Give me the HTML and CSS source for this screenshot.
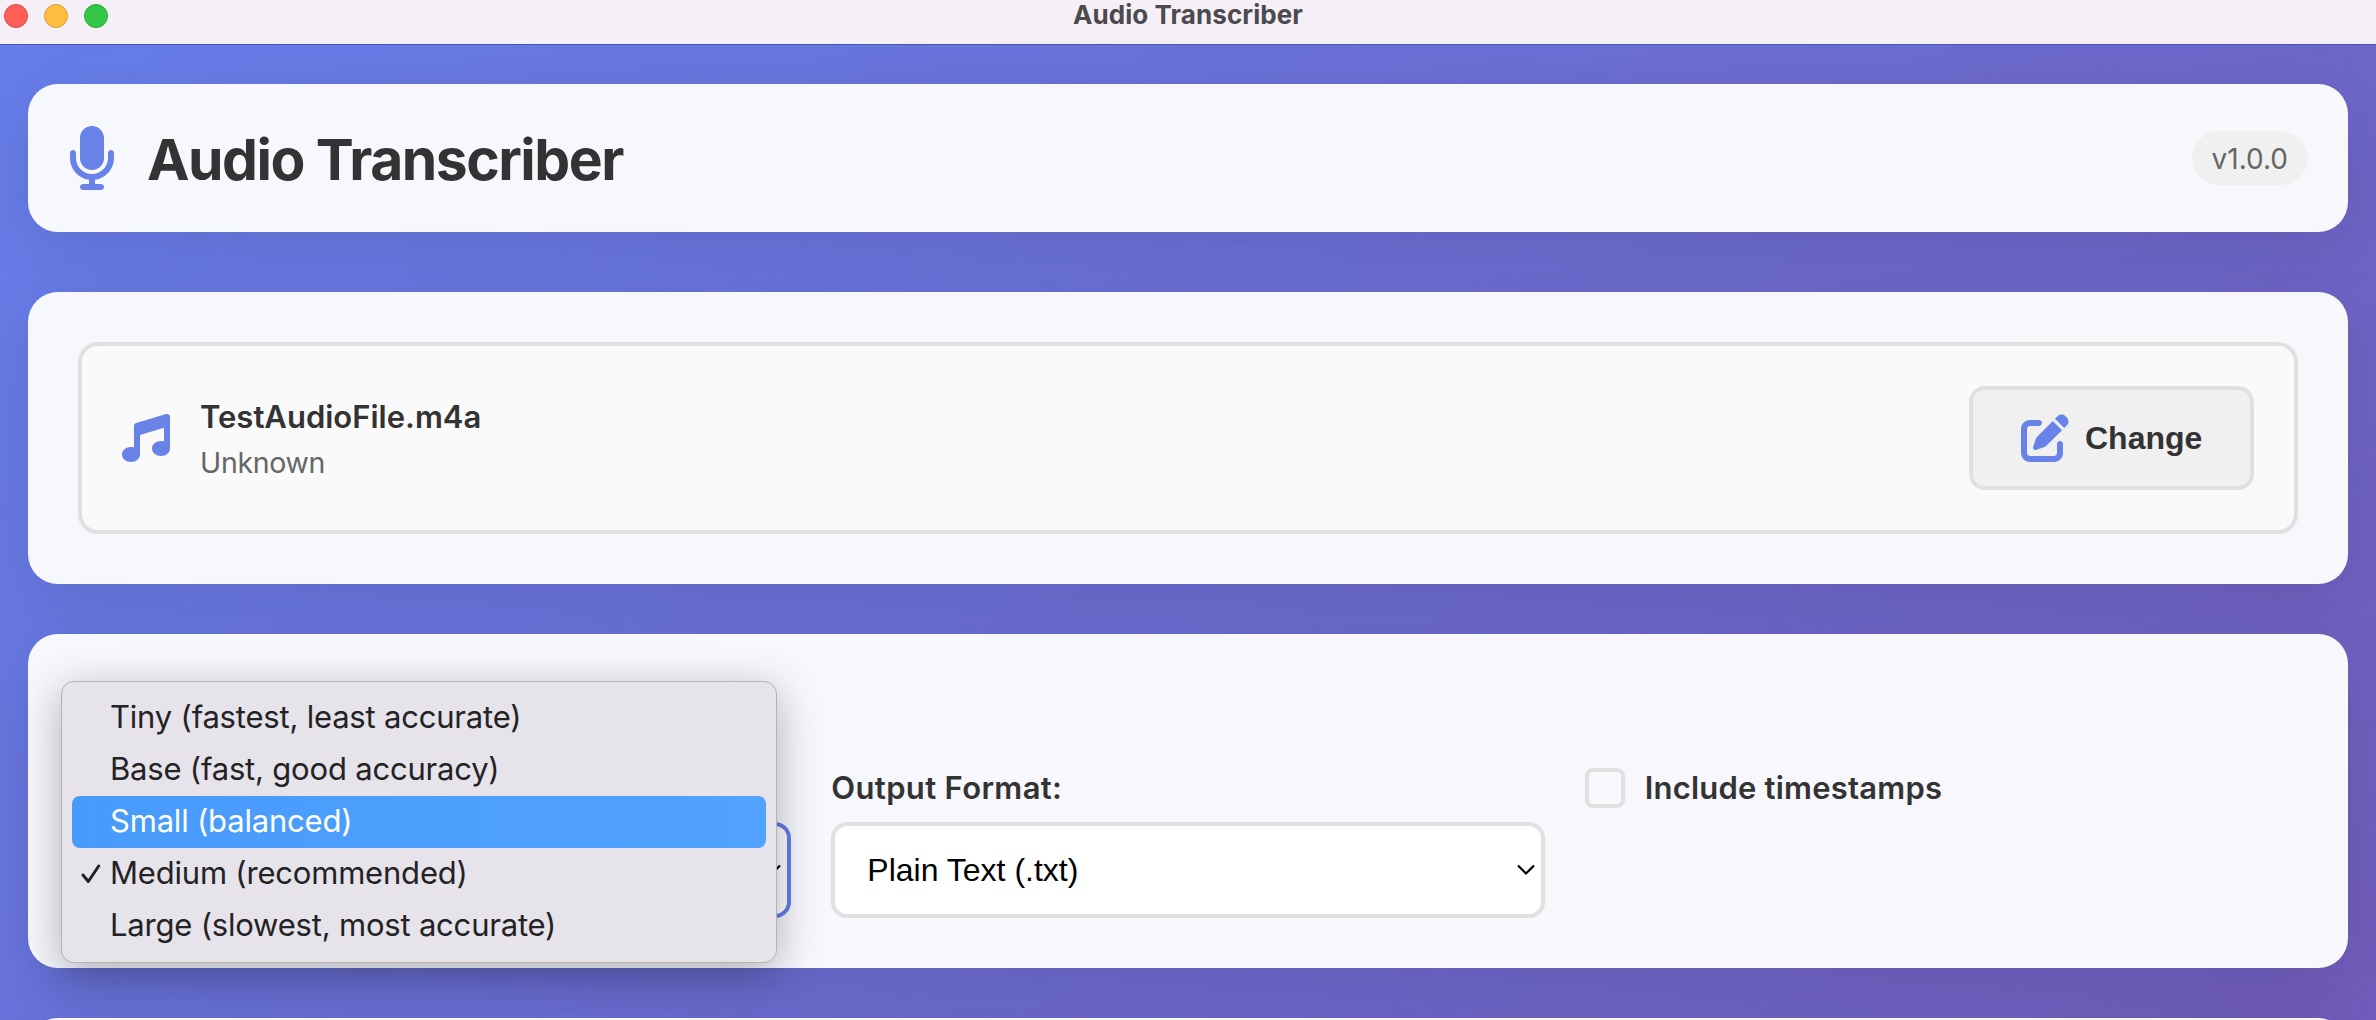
FILE: index.html
```html
<!DOCTYPE html>
<html lang="en">
<head>
<meta charset="utf-8">
<title>Audio Transcriber</title>
<link rel="stylesheet" href="styles.css">
</head>
<body>
<div class="titlebar">
  <div class="lights"><span class="light close"></span><span class="light minimize"></span><span class="light maximize"></span></div>
  <div class="window-title">Audio Transcriber</div>
</div>
<main class="app">
  <header class="card header">
    <svg class="mic" viewBox="0 0 384 512"><path d="M192 0C139 0 96 43 96 96V256c0 53 43 96 96 96s96-43 96-96V96c0-53-43-96-96-96zM64 216c0-13.300-10.700-24-24-24s-24 10.700-24 24v40c0 89.100 66.200 162.700 152 174.400V464H120c-13.300 0-24 10.700-24 24s10.700 24 24 24h72 72c13.300 0 24-10.700 24-24s-10.700-24-24-24H216V430.400c85.800-11.700 152-85.300 152-174.400V216c0-13.300-10.700-24-24-24s-24 10.700-24 24v40c0 70.700-57.300 128-128 128s-128-57.300-128-128V216z"/></svg>
    <h1>Audio Transcriber</h1>
    <span class="version">v1.0.0</span>
  </header>
  <section class="card file-card">
    <div class="file">
      <svg class="icon" viewBox="0 0 512 512"><path d="M499.100 6.300c8.100 6 12.900 15.600 12.900 25.700v72V368c0 44.200-43 80-96 80s-96-35.800-96-80s43-80 96-80c11.200 0 22 1.600 32 4.600V147L192 223.800V432c0 44.200-43 80-96 80s-96-35.800-96-80s43-80 96-80c11.200 0 22 1.600 32 4.600V200 128c0-14.100 9.300-26.600 22.800-30.700l320-96c9.700-2.900 20.200-1.100 28.300 5z"/></svg>
      <div class="file-info">
        <div class="file-name">TestAudioFile.m4a</div>
        <div class="file-size">Unknown</div>
      </div>
      <button class="change">
        <svg class="icon" viewBox="0 0 512 512"><path d="M471.600 21.700c-21.900-21.900-57.300-21.900-79.200 0L362.300 51.700l97.900 97.900 30.100-30.100c21.900-21.900 21.900-57.300 0-79.200L471.600 21.700zm-299.200 220c-6.100 6.100-10.800 13.600-13.500 21.900l-29.600 88.800c-2.900 8.600-.6 18.100 5.800 24.600s15.900 8.700 24.600 5.800l88.800-29.600c8.200-2.700 15.700-7.400 21.900-13.500L437.700 172.300 339.700 74.300 172.400 241.700zM96 64C43 64 0 107 0 160V416c0 53 43 96 96 96H352c53 0 96-43 96-96V320c0-17.700-14.300-32-32-32s-32 14.300-32 32v96c0 17.700-14.300 32-32 32H96c-17.700 0-32-14.300-32-32V160c0-17.700 14.300-32 32-32h96c17.700 0 32-14.300 32-32s-14.300-32-32-32H96z"/></svg>
        <span>Change</span>
      </button>
    </div>
  </section>
  <section class="card options">
    <div class="field model">
      <div class="select focused"><svg class="chevron" viewBox="0 0 18 12"><path d="M1 1.500l8 8 8-8"/></svg></div>
      <ul class="menu">
        <li>Tiny (fastest, least accurate)</li>
        <li>Base (fast, good accuracy)</li>
        <li class="active">Small (balanced)</li>
        <li class="checked"><svg class="check" viewBox="0 0 20 20"><path d="M2 11l5.300 6.500L17.700 2"/></svg>Medium (recommended)</li>
        <li>Large (slowest, most accurate)</li>
      </ul>
    </div>
    <div class="field">
      <label class="label">Output Format:</label>
      <div class="select"><span>Plain Text (.txt)</span><svg class="chevron" viewBox="0 0 18 12"><path d="M1 1.500l8 8 8-8"/></svg></div>
    </div>
    <label class="toggle"><span class="box"></span><span>Include timestamps</span></label>
  </section>
  <section class="card next"></section>
</main>
</body>
</html>
```
FILE: styles.css
```css
* { box-sizing: border-box; }
body {
  margin: 0;
  height: 1020px;
  overflow: hidden;
  font-family: Inter, "Liberation Sans", sans-serif;
  font-size: 32px;
  color: #333;
}
.titlebar {
  display: grid;
  grid-template-columns: 1fr auto 1fr;
  height: 44px;
  padding: 4px 4px 0;
  background: #f5f0f7;
}
.lights { display: flex; gap: 16px; }
.light { width: 24px; height: 24px; border-radius: 50%; border: 1px solid; }
.close { background: #ff5f57; border-color: #e2463f; }
.minimize { background: #febc40; border-color: #dfa033; }
.maximize { background: #34c84a; border-color: #27aa35; }
.window-title {
  font-size: 26px;
  font-weight: 700;
  line-height: 22px;
  letter-spacing: .08px;
  color: #4c4a4d;
  white-space: nowrap;
}
.app {
  height: 976px;
  padding: 39px 28px 0;
  overflow: hidden;
  border-top: 1px solid #4258bd;
  background: linear-gradient(135deg, #667eea 0%, #764ba2 100%) 0 0 / 100% 2700px no-repeat;
}
.card {
  border-radius: 30px;
  background: rgba(255, 255, 255, .95);
  box-shadow: 0 16px 64px rgba(0, 0, 0, .1);
}
.header { display: flex; align-items: center; height: 148px; padding: 0 40px; margin-bottom: 60px; }
.mic { width: 48px; height: 64px; fill: #6882e8; }
h1 {
  flex: 1;
  margin: 0 0 0 31px;
  padding-top: 4px;
  font-size: 57px;
  font-weight: 700;
  line-height: 68px;
  letter-spacing: -1.5px;
}
.version {
  display: flex;
  align-items: center;
  height: 54px;
  padding: 2px 20px 0;
  border-radius: 27px;
  background: #f0f0f0;
  color: #666;
  font-size: 28px;
}
.file-card { height: 292px; padding: 50px; margin-bottom: 50px; }
.file {
  display: flex;
  align-items: center;
  height: 192px;
  padding: 0 40px;
  border: 4px solid #e0e0e0;
  border-radius: 20px;
  background: #fafafa;
}
.icon { width: 48px; height: 48px; fill: #6882e8; flex: none; }
.file-info { flex: 1; margin-left: 30px; padding-top: 3px; }
.file-name { font-weight: 600; font-size: 31px; line-height: 46px; }
.file-size { font-size: 28.500px; line-height: 46px; letter-spacing: -.3px; color: #666; }
.change {
  display: flex;
  align-items: center;
  gap: 16px;
  width: 285px;
  height: 104px;
  padding: 0 0 0 48px;
  border: 4px solid #e0e0e0;
  border-radius: 16px;
  background: #f0f0f0;
  color: #333;
  font: 700 32px "Liberation Sans", sans-serif;
}
.options {
  display: grid;
  grid-template-columns: repeat(3, 1fr);
  gap: 40px;
  height: 334px;
  padding: 134px 50px 50px;
  margin-bottom: 50px;
}
.field { display: flex; flex-direction: column; justify-content: space-between; }
.label, .toggle { font-weight: 600; font-size: 31px; line-height: 40px; }
.label { letter-spacing: .35px; }
.select {
  display: flex;
  align-items: center;
  justify-content: space-between;
  height: 96px;
  padding: 0 6px 0 32px;
  border: 4px solid #e0e0e0;
  border-radius: 16px;
  background: #fff;
  color: #000;
  font: 32px "Liberation Sans", sans-serif;
}
.focused { border-color: #667eea; justify-content: flex-end; }
.chevron { width: 18px; height: 12px; fill: none; stroke: #000; stroke-width: 2.200; }
.model { position: relative; justify-content: flex-end; }
.menu {
  position: absolute;
  left: -17px;
  top: -87px;
  width: 716px;
  height: 282px;
  margin: 0;
  padding: 10px;
  list-style: none;
  border: 1px solid #b4b1b7;
  border-radius: 13px;
  background: #e7e3ea;
  color: #232224;
  font-size: 31px;
  letter-spacing: -.2px;
  box-shadow: 0 10px 44px rgba(0, 0, 0, .3);
}
.menu li {
  display: flex;
  align-items: center;
  height: 52px;
  padding: 0 0 4px 38px;
  border-radius: 8px;
}
.menu .active { background: linear-gradient(90deg, #479bfb, #52a2ff); color: #fff; }
.menu .checked { padding-left: 9px; }
.check {
  width: 20px;
  height: 20px;
  margin: 4px 9px 0 0;
  fill: none;
  stroke: #232224;
  stroke-width: 3;
  stroke-linecap: round;
  stroke-linejoin: round;
}
.toggle { display: flex; align-items: center; gap: 20px; height: 40px; letter-spacing: .22px; }
.box { width: 40px; height: 40px; border: 4px solid #e0e0e0; border-radius: 8px; }
.next { height: 200px; }
```
